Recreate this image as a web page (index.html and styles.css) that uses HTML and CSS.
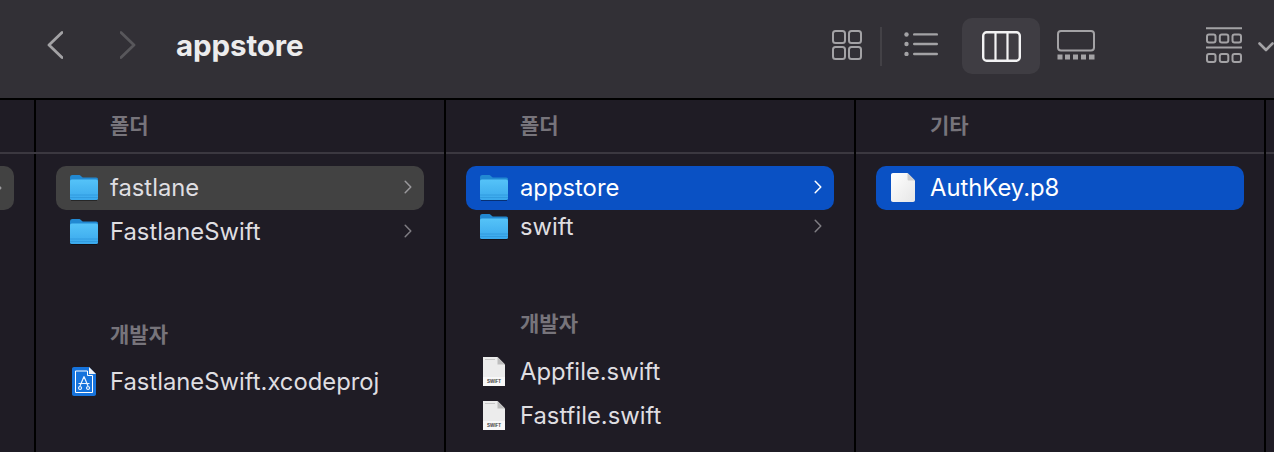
FILE: index.html
```html
<!DOCTYPE html>
<html lang="en">

<head>
    <meta charset="UTF-8">
    <title>appstore</title>
    <link rel="stylesheet" href="styles.css">
</head>

<body>
    <svg class="defs" width="0" height="0">
        <defs>
            <linearGradient id="folderBody" x1="0" y1="0" x2="0" y2="1">
                <stop offset="0" stop-color="#55c3f8"/>
                <stop offset="1" stop-color="#3aa8ec"/>
            </linearGradient>
            <linearGradient id="pageBody" x1="0" y1="0" x2="1" y2="1">
                <stop offset="0" stop-color="#ffffff"/>
                <stop offset="1" stop-color="#e6e6e6"/>
            </linearGradient>
            <symbol id="folder" viewBox="0 0 28 27">
                <path d="M0 3.500C0 1.800 1 1 2.400 1h6.200c1.200 0 1.800.5 2.600 1.300.8.8 1.400 1.200 2.600 1.200h12.400c1.200 0 1.800.8 1.800 2V24c0 1.200-.7 2-1.900 2H1.900C.7 26 0 25.200 0 24z" fill="#2289d2"/>
                <path d="M0 7.500C0 6.300.7 5.500 1.900 5.500h24.200c1.200 0 1.900.8 1.900 2V24c0 1.200-.7 2-1.900 2H1.900C.7 26 0 25.200 0 24z" fill="url(#folderBody)"/>
                <path d="M0 21h28M0 23.500h28" stroke="#2f98dc" stroke-width=".8"/>
                <rect x="1" y="26" width="26" height="1" fill="#000" opacity=".4"/>
            </symbol>
            <symbol id="swiftdoc" viewBox="0 0 22 29">
                <path d="M0 0h14.500L22 7.500V29H0z" fill="#ececec"/>
                <path d="M14.500 0v7.500H22z" fill="#bdbdbd"/>
                <path d="M2 2.500h10" stroke="#c8c8c8"/>
                <rect y="20" width="22" height="9" fill="#f8f8f8"/>
                <text class="swift-tag" x="11" y="25.500" text-anchor="middle">SWIFT</text>
            </symbol>
            <symbol id="chevron" viewBox="0 0 8 14">
                <path d="M1.200 1.200 6.800 7l-5.600 5.800" fill="none" stroke="currentColor" stroke-width="1.500" stroke-linecap="round" stroke-linejoin="round"/>
            </symbol>
        </defs>
    </svg>

    <div class="window">
        <div class="toolbar">
            <svg class="nav nav-back" width="16" height="28" viewBox="0 0 16 28">
                <path d="M15 1.500 2 14l13 12.500" fill="none" stroke="#a3a2a5" stroke-width="2.800" stroke-linecap="round" stroke-linejoin="round"/>
            </svg>
            <svg class="nav nav-forward" width="16" height="28" viewBox="0 0 16 28">
                <path d="M1 1.500 14 14 1 26.500" fill="none" stroke="#58575b" stroke-width="2.800" stroke-linecap="round" stroke-linejoin="round"/>
            </svg>
            <div class="title">appstore</div>

            <svg class="tool tool-grid" width="30" height="30" viewBox="0 0 30 30">
                <g fill="none" stroke="#a3a2a5" stroke-width="2">
                    <rect x="1" y="1" width="12" height="12" rx="2.500"/>
                    <rect x="17" y="1" width="12" height="12" rx="2.500"/>
                    <rect x="1" y="17" width="12" height="12" rx="2.500"/>
                    <rect x="17" y="17" width="12" height="12" rx="2.500"/>
                </g>
            </svg>
            <div class="divider"></div>
            <svg class="tool tool-list" width="34" height="24" viewBox="0 0 34 24">
                <g fill="#a3a2a5">
                    <circle cx="2.500" cy="2.500" r="2.200"/>
                    <circle cx="2.500" cy="12" r="2.200"/>
                    <circle cx="2.500" cy="22" r="2.200"/>
                    <rect x="9" y="1.200" width="25" height="2.400" rx="1.200"/>
                    <rect x="9" y="10.800" width="25" height="2.400" rx="1.200"/>
                    <rect x="9" y="20.800" width="25" height="2.400" rx="1.200"/>
                </g>
            </svg>
            <div class="tool-active">
                <svg width="39" height="31" viewBox="0 0 39 31">
                    <rect x="1.200" y="1.200" width="36.600" height="28.600" rx="3.500" fill="none" stroke="#f2f2f3" stroke-width="2.400"/>
                    <path d="M13.500 1v29M25.500 1v29" stroke="#f2f2f3" stroke-width="2.200"/>
                </svg>
            </div>
            <svg class="tool tool-gallery" width="38" height="30" viewBox="0 0 38 30">
                <rect x="1" y="1" width="36" height="19.500" rx="3" fill="none" stroke="#a3a2a5" stroke-width="2"/>
                <g fill="#a3a2a5">
                    <rect x="0.500" y="24.500" width="5" height="5"/>
                    <rect x="8" y="24.500" width="5" height="5"/>
                    <rect x="16" y="24.500" width="5" height="5"/>
                    <rect x="24" y="24.500" width="5" height="5"/>
                    <rect x="32" y="24.500" width="5.500" height="5"/>
                </g>
            </svg>
            <svg class="tool tool-group" width="36" height="36" viewBox="0 0 36 36">
                <g fill="none" stroke="#a3a2a5" stroke-width="2">
                    <path d="M0 1.200h36M0 20.500h36"/>
                    <rect x="1" y="7.500" width="8.500" height="8" rx="2"/>
                    <rect x="13.800" y="7.500" width="8.500" height="8" rx="2"/>
                    <rect x="26.500" y="7.500" width="8.500" height="8" rx="2"/>
                    <rect x="1" y="27" width="8.500" height="8" rx="2"/>
                    <rect x="13.800" y="27" width="8.500" height="8" rx="2"/>
                    <rect x="26.500" y="27" width="8.500" height="8" rx="2"/>
                </g>
            </svg>
            <svg class="tool-caret" width="16" height="10" viewBox="0 0 16 10">
                <path d="M1.500 1.500 8 8l6.500-6.500" fill="none" stroke="#a3a2a5" stroke-width="2.600" stroke-linecap="round" stroke-linejoin="round"/>
            </svg>
        </div>

        <div class="browser">
            <div class="column column-stub">
                <div class="column-head"></div>
                <div class="stub-row">
                    <svg class="stub-arrow"><use href="#chevron"/></svg>
                </div>
            </div>

            <div class="column">
                <div class="column-head"><span>폴더</span></div>
                <div class="row row-parent">
                    <svg class="icon-folder"><use href="#folder"/></svg>
                    <span class="name">fastlane</span>
                    <svg class="arrow"><use href="#chevron"/></svg>
                </div>
                <div class="row">
                    <svg class="icon-folder"><use href="#folder"/></svg>
                    <span class="name">FastlaneSwift</span>
                    <svg class="arrow"><use href="#chevron"/></svg>
                </div>
                <div class="section section-wide">개발자</div>
                <div class="row">
                    <svg class="icon-doc" viewBox="0 0 24 29">
                        <path d="M2 0h15l7 7v20c0 1.200-.8 2-2 2H2c-1.200 0-2-.8-2-2V2C0 .8.800 0 2 0z" fill="#1673dc"/>
                        <path d="M17 0l7 7h-7z" fill="#f2f2f2"/>
                        <path d="M3.500 4h12v4.500h5v17h-17z" fill="none" stroke="#fff" stroke-width="1"/>
                        <path d="M12 9.500 8 19M12 9.500l4 9.500M6.500 16.500h11M8 19.500a1.500 1.500 0 1 0 .1 0M16 19.500a1.500 1.500 0 1 0 .1 0" fill="none" stroke="#e8f2ff" stroke-width="1.200"/>
                    </svg>
                    <span class="name">FastlaneSwift.xcodeproj</span>
                </div>
            </div>

            <div class="column">
                <div class="column-head"><span>폴더</span></div>
                <div class="row row-active">
                    <svg class="icon-folder"><use href="#folder"/></svg>
                    <span class="name">appstore</span>
                    <svg class="arrow"><use href="#chevron"/></svg>
                </div>
                <div class="row row-tight">
                    <svg class="icon-folder"><use href="#folder"/></svg>
                    <span class="name">swift</span>
                    <svg class="arrow"><use href="#chevron"/></svg>
                </div>
                <div class="section">개발자</div>
                <div class="row">
                    <svg class="icon-swift"><use href="#swiftdoc"/></svg>
                    <span class="name">Appfile.swift</span>
                </div>
                <div class="row">
                    <svg class="icon-swift"><use href="#swiftdoc"/></svg>
                    <span class="name">Fastfile.swift</span>
                </div>
            </div>

            <div class="column">
                <div class="column-head"><span>기타</span></div>
                <div class="row row-active">
                    <svg class="icon-page" viewBox="0 0 24 29">
                        <path d="M2 0h14.500L24 7.500V27c0 1.200-.8 2-2 2H2c-1.200 0-2-.8-2-2V2C0 .8.800 0 2 0z" fill="url(#pageBody)"/>
                        <path d="M16.500 0v6c0 1 .5 1.500 1.500 1.500h6z" fill="#cfcfcf"/>
                    </svg>
                    <span class="name">AuthKey.p8</span>
                </div>
            </div>

            <div class="column column-end">
                <div class="column-head"></div>
            </div>
        </div>
    </div>
</body>

</html>
```

FILE: styles.css
```css
html, body {
    margin: 0;
    padding: 0;
    background-color: #1f1c25;
}

.defs {
    display: block;
    height: 0;
}

.window {
    width: 1274px;
    height: 452px;
    overflow: hidden;
    font-family: Inter, 'Noto Sans CJK KR', sans-serif;
    display: flex;
    flex-direction: column;
}

/* toolbar */
.toolbar {
    height: 98px;
    flex: none;
    box-sizing: border-box;
    background-color: #323036;
    display: flex;
    align-items: center;
    padding: 0 0 6px 47px;
}

.nav {
    flex: none;
    margin-top: -2px;
}

.nav-forward {
    margin-left: 57px;
}

.title {
    width: 656px;
    margin-left: 40px;
    margin-top: -2px;
    font-size: 29.500px;
    font-weight: 700;
    letter-spacing: -0.1px;
    color: #ececed;
    white-space: nowrap;
}

.tool {
    flex: none;
    margin-top: -2px;
}

.divider {
    width: 2px;
    height: 39px;
    margin-left: 18px;
    background-color: #434146;
}

.tool-list {
    margin-left: 22px;
    margin-top: -4px;
}

.tool-active {
    width: 78px;
    height: 56px;
    margin-left: 24px;
    border-radius: 10px;
    background-color: #3f3d43;
    display: flex;
    align-items: center;
    justify-content: center;
    flex: none;
}

.tool-gallery {
    margin-left: 17px;
}

.tool-group {
    margin-left: 111px;
}

.tool-caret {
    margin-left: 16px;
    flex: none;
    margin-top: 1px;
}

/* columns */
.browser {
    flex: 1;
    display: flex;
    border-top: 2px solid #000;
}

.column {
    width: 408px;
    flex: none;
    border-right: 2px solid #000;
}

.column-stub {
    width: 34px;
}

.column-end {
    border-right: 0;
    width: 8px;
}

.column-head {
    height: 54px;
    box-sizing: border-box;
    border-bottom: 2px solid #3b3840;
    padding-left: 74px;
    font-size: 21px;
    font-weight: 700;
    line-height: 52px;
    color: #77747b;
}

.stub-row {
    width: 14px;
    height: 44px;
    margin-top: 12px;
    border-radius: 0 10px 10px 0;
    background-color: #424242;
    display: flex;
    align-items: center;
    overflow: hidden;
}

.stub-arrow {
    width: 8px;
    height: 14px;
    margin-left: -6px;
    color: #9a999c;
    flex: none;
}

.row {
    height: 44px;
    box-sizing: border-box;
    margin: 0 20px;
    padding: 0 0 2px 14px;
    display: flex;
    align-items: center;
    font-size: 23.800px;
    color: #dfdee1;
    border-radius: 10px;
}

.column-head + .row {
    margin-top: 12px;
}

.row-tight {
    height: 34px;
}

.row-parent {
    background-color: #424242;
}

.row-active {
    background-color: #0a51c4;
    color: #fff;
}

.name {
    white-space: nowrap;
}

.icon-folder {
    width: 28px;
    height: 27px;
    flex: none;
    margin-right: 12px;
}

.icon-doc {
    width: 24px;
    height: 29px;
    flex: none;
    margin: 0 14px 0 2px;
}

.icon-swift {
    width: 22px;
    height: 29px;
    flex: none;
    margin: 0 15px 0 3px;
}

.swift-tag {
    font-family: 'Liberation Sans', sans-serif;
    font-size: 4.500px;
    font-weight: 700;
    fill: #444;
}

.icon-page {
    width: 24px;
    height: 29px;
    flex: none;
    margin: 0 15px 0 1px;
}

.arrow {
    width: 8px;
    height: 14px;
    margin-left: auto;
    margin-right: 12px;
    color: #7f7d83;
    flex: none;
}

.row-parent .arrow {
    color: #9a999c;
}

.row-active .arrow {
    color: #fff;
}

.section {
    height: 38px;
    margin-top: 61px;
    margin-bottom: 7px;
    padding-left: 74px;
    font-size: 21px;
    font-weight: 700;
    line-height: 38px;
    color: #77747b;
}

.section-wide {
    margin-top: 62px;
    margin-bottom: 6px;
}
```
